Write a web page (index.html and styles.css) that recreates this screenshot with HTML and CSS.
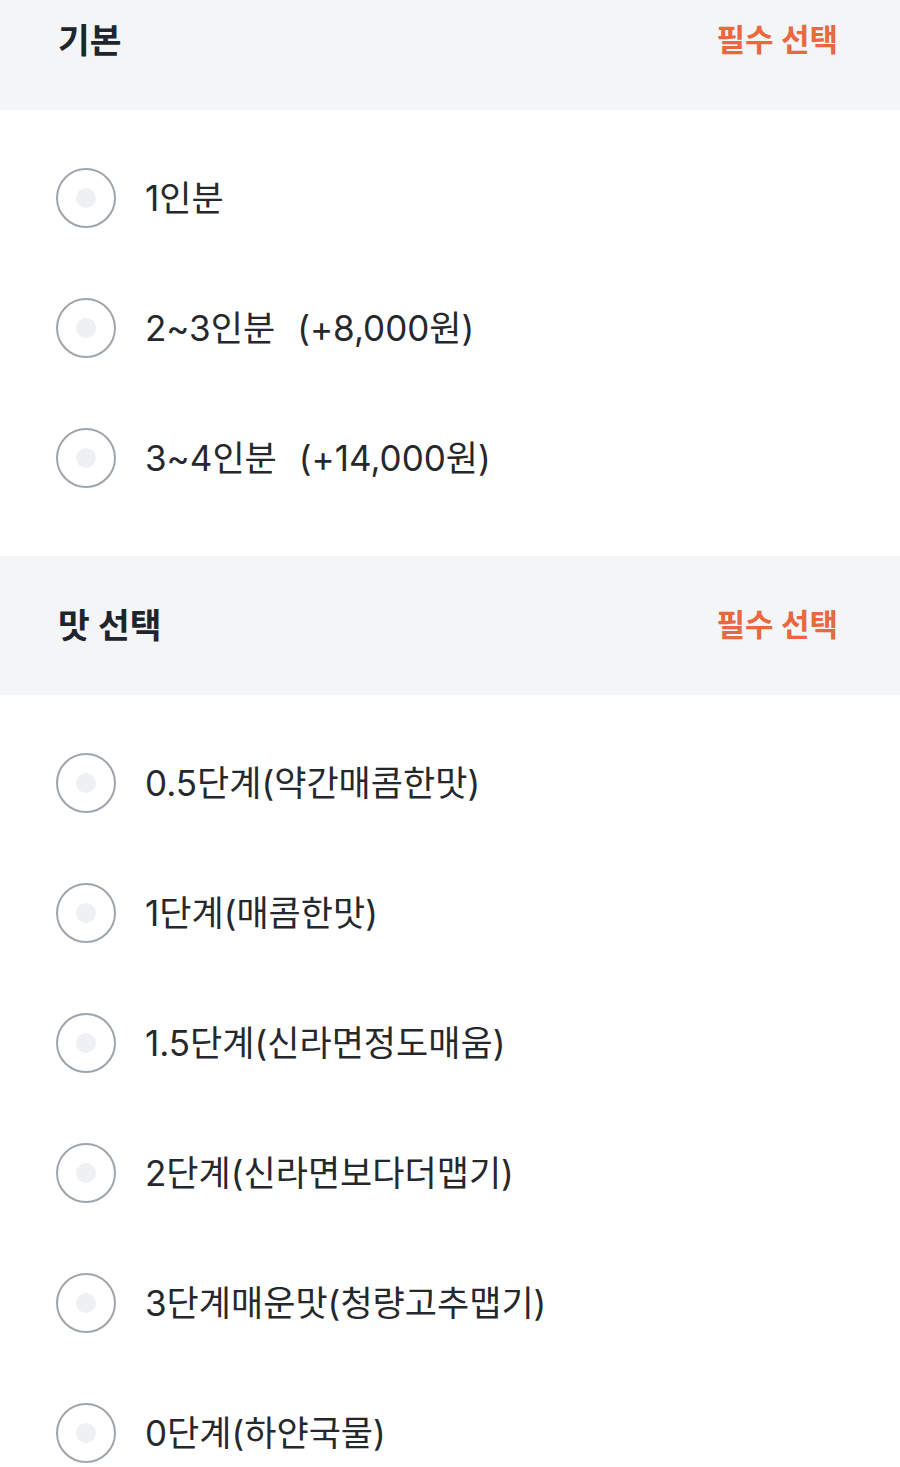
FILE: index.html
```html
<!DOCTYPE html>
<html lang="ko">
<head>
<meta charset="utf-8">
<link rel="stylesheet" href="styles.css">
</head>
<body>
<div class="page">
  <section class="group">
    <div class="group-head">
      <h2 class="group-title">기본</h2>
      <span class="required">필수 선택</span>
    </div>
    <ul class="options">
      <li class="option"><span class="radio"></span><span class="label">1인분</span></li>
      <li class="option"><span class="radio"></span><span class="label">2~3인분<span class="price">(+8,000원)</span></span></li>
      <li class="option"><span class="radio"></span><span class="label">3~4인분<span class="price">(+14,000원)</span></span></li>
    </ul>
  </section>
  <section class="group">
    <div class="group-head">
      <h2 class="group-title">맛 선택</h2>
      <span class="required">필수 선택</span>
    </div>
    <ul class="options">
      <li class="option"><span class="radio"></span><span class="label">0.5단계(약간매콤한맛)</span></li>
      <li class="option"><span class="radio"></span><span class="label">1단계(매콤한맛)</span></li>
      <li class="option"><span class="radio"></span><span class="label">1.5단계(신라면정도매움)</span></li>
      <li class="option"><span class="radio"></span><span class="label">2단계(신라면보다더맵기)</span></li>
      <li class="option"><span class="radio"></span><span class="label">3단계매운맛(청량고추맵기)</span></li>
      <li class="option"><span class="radio"></span><span class="label">0단계(하얀국물)</span></li>
    </ul>
  </section>
</div>
</body>
</html>
```
FILE: styles.css
```css
* { box-sizing: border-box; }
html, body { margin: 0; padding: 0; background: #fff; }
body {
  font-family: Inter, "Noto Sans CJK KR", sans-serif;
  color: #222529;
  overflow: hidden;
}
.page { margin-top: -29px; }
.group-head {
  height: 139px;
  background: #f4f5f7;
  display: flex;
  align-items: center;
  justify-content: space-between;
  padding: 0 62px 6px 58px;
}
.group-title {
  margin: 0;
  font-size: 34.5px;
  font-weight: 700;
  color: #1f252d;
}
.required {
  font-size: 31px;
  font-weight: 700;
  color: #e8683f;
}
.options {
  list-style: none;
  margin: 0;
  padding: 23px 0 33px;
}
.option {
  height: 130px;
  display: flex;
  align-items: center;
  padding-left: 56px;
}
.radio {
  width: 60px;
  height: 60px;
  border-radius: 50%;
  border: 2px solid #9fa5ac;
  display: flex;
  align-items: center;
  justify-content: center;
  flex: none;
}
.radio::after {
  content: "";
  width: 20px;
  height: 20px;
  border-radius: 50%;
  background: #eef0f3;
}
.label {
  margin-left: 29px;
  padding-bottom: 5px;
  font-size: 35px;
  font-weight: 400;
  color: #25282c;
}
.price { margin-left: 22px; }
```
